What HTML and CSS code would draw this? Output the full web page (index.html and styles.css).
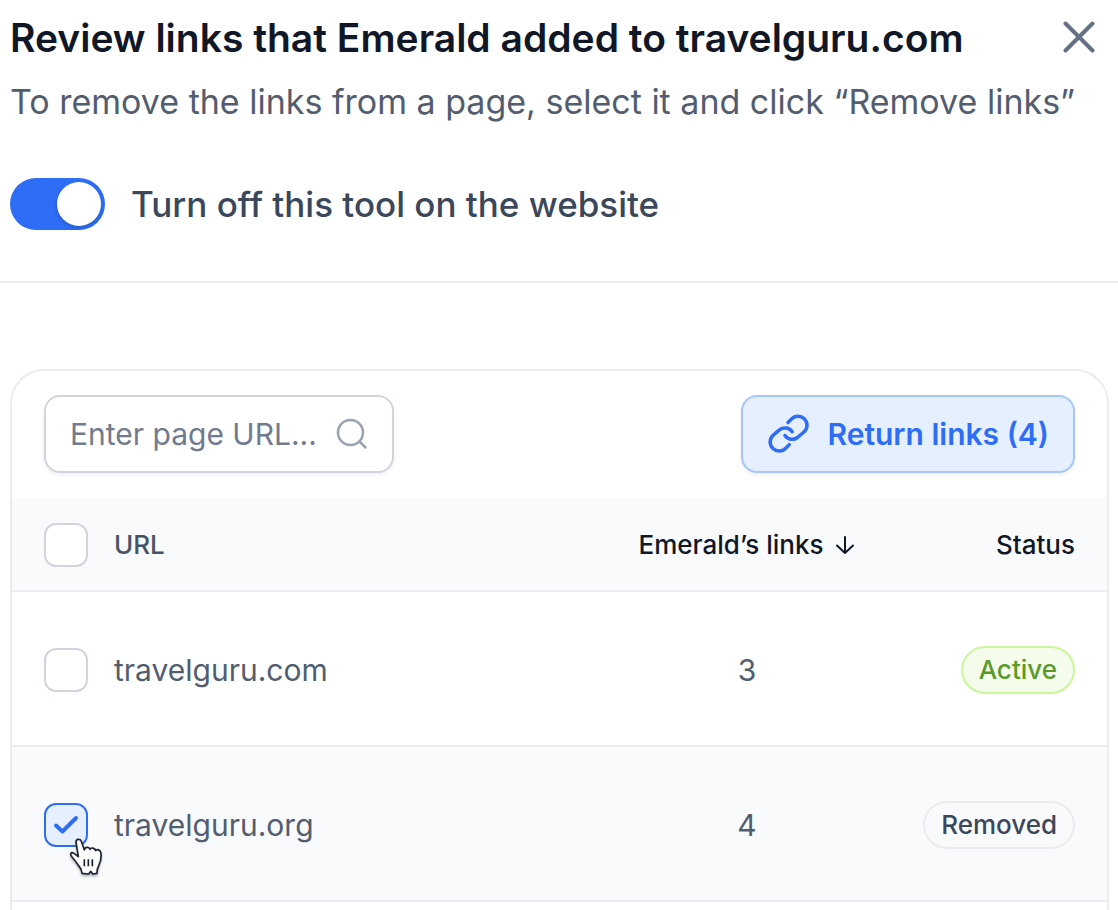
FILE: index.html
```html
<!DOCTYPE html>
<html lang="en">
<head>
<meta charset="utf-8">
<meta name="viewport" content="width=device-width, initial-scale=1">
<title>Review links</title>
<link rel="stylesheet" href="styles.css">
</head>
<body>
<header class="header">
  <div class="title-row">
    <h1 class="title">Review links that Emerald added to travelguru.com</h1>
    <button class="close" type="button" aria-label="Close">
      <svg width="34" height="34" viewBox="0 0 34 34" fill="none" stroke="currentColor" stroke-width="4" stroke-linecap="round"><path d="M3.500 2.500 30.500 29.500M30.500 2.500 3.500 29.500"/></svg>
    </button>
  </div>
  <p class="subtitle">To remove the links from a page, select it and click “Remove links”</p>
  <label class="toggle-row">
    <input class="toggle" type="checkbox" role="switch" checked>
    <span>Turn off this tool on the website</span>
  </label>
</header>
<main class="main">
  <section class="card">
    <div class="toolbar">
      <div class="search">
        <input class="search-input" type="text" placeholder="Enter page URL..." aria-label="Enter page URL">
        <svg class="search-icon" width="32" height="32" viewBox="0 0 32 32" fill="none" stroke="currentColor" stroke-width="2.500" stroke-linecap="round"><circle cx="14.500" cy="14.500" r="12.500"/><path d="m23.500 23.500 6 6"/></svg>
      </div>
      <button class="return" type="button">
        <svg width="42" height="42" viewBox="0 0 42 42" fill="none" stroke="currentColor" stroke-width="3.500" stroke-linecap="round" stroke-linejoin="round"><path d="M21 9.500 24.500 6A9 9 0 0 1 37.500 18.500L30.500 24.500A8.700 8.700 0 0 1 18 22.500M22.200 31.700 18.700 35.200A9 9 0 0 1 5.700 22.700L12.700 16.700A8.700 8.700 0 0 1 25.200 18.700"/></svg>
        <span>Return links (4)</span>
      </button>
    </div>
    <table class="table">
      <thead>
        <tr>
          <th class="col-check"><input class="check" type="checkbox" aria-label="Select all pages"></th>
          <th class="col-url">URL</th>
          <th class="col-links"><span class="sort">Emerald’s links
            <svg width="20" height="20" viewBox="0 0 20 20" fill="none" stroke="currentColor" stroke-width="2" stroke-linecap="round" stroke-linejoin="round"><path d="M10 2v16M2 10.500l8 7.500 8-7.500"/></svg></span></th>
          <th class="col-status">Status</th>
        </tr>
      </thead>
      <tbody>
        <tr>
          <td class="col-check"><input class="check" type="checkbox" aria-label="Select travelguru.com"></td>
          <td class="col-url">travelguru.com</td>
          <td class="col-links">3</td>
          <td class="col-status"><span class="badge badge-active">Active</span></td>
        </tr>
        <tr class="selected">
          <td class="col-check">
            <div class="check-wrap">
              <input class="check" type="checkbox" aria-label="Select travelguru.org" checked>
              <svg class="tick" width="26" height="20" viewBox="0 0 26 20" fill="none" stroke="currentColor" stroke-width="4" stroke-linecap="round" stroke-linejoin="round"><path d="M3 10.500 9.500 16.500 23 3"/></svg>
              <svg class="pointer" width="34" height="38" viewBox="27 24 102 114"><path d="M48 36C48 27 60 25 64 34L73 60C74 50 88 50 90 58C93 51 105 54 107 62C110 56 122 59 123 70C124 84 121 98 116 107C112 113 111 118 111 130L98 132 92 124 86 132 66 130C66 120 62 114 56 107C50 98 44 90 36 81C28 72 34 64 42 70L55 80Z" fill="#fff" stroke="#1b2230" stroke-width="5" stroke-linejoin="round"/><path d="M73 88v21M85 88v21M97 88v21" stroke="#1b2230" stroke-width="5"/></svg>
            </div>
          </td>
          <td class="col-url">travelguru.org</td>
          <td class="col-links">4</td>
          <td class="col-status"><span class="badge badge-removed">Removed</span></td>
        </tr>
      </tbody>
    </table>
  </section>
</main>
</body>
</html>
```
FILE: styles.css
```css
* { box-sizing: border-box; }
body {
  margin: 0;
  min-height: 100vh;
  display: flex;
  flex-direction: column;
  background: #fff;
  color: #525d70;
  font-family: Inter, "Liberation Sans", sans-serif;
}
button, input { font: inherit; }
svg { display: block; flex: none; }

.header {
  padding: 12px 22px 51px 10px;
  border-bottom: 2px solid #eaecf0;
}
.title-row {
  display: flex;
  align-items: center;
  justify-content: space-between;
}
.title {
  margin: 0;
  color: #101828;
  font-size: 39px;
  line-height: 52px;
  font-weight: 600;
}
.close {
  padding: 0;
  border: 0;
  background: none;
  color: #667085;
}
.subtitle {
  margin: 12px 0 0;
  font-size: 34px;
  line-height: 52px;
}
.toggle-row {
  display: flex;
  align-items: center;
  gap: 26px;
  margin-top: 50px;
  color: #3b475b;
  font-size: 35px;
  line-height: 52px;
  font-weight: 500;
}
.toggle {
  appearance: none;
  display: flex;
  justify-content: flex-end;
  flex: none;
  width: 95px;
  height: 52px;
  margin: 0;
  padding: 4px;
  border-radius: 26px;
  background: #2e6df6;
}
.toggle::before {
  content: "";
  width: 44px;
  height: 44px;
  border-radius: 50%;
  background: #fff;
  box-shadow: 0 2px 4px rgba(16, 24, 40, 0.2);
}

.main {
  flex: 1;
  display: flex;
  padding: 86px 9px 0 10px;
}
.card {
  flex: 1;
  border: 2px solid #eaecf0;
  border-bottom: 0;
  border-radius: 34px 34px 0 0;
}
.toolbar {
  display: flex;
  align-items: center;
  justify-content: space-between;
  padding: 24px 32px 25px;
}
.search {
  display: flex;
  align-items: center;
  width: 350px;
  height: 78px;
  padding: 0 24px;
  border: 2px solid #d0d5dd;
  border-radius: 16px;
  box-shadow: 0 2px 4px rgba(16, 24, 40, 0.06);
  color: #98a2b3;
}
.search-input {
  flex: 1;
  min-width: 0;
  padding: 0;
  border: 0;
  outline: 0;
  background: none;
  color: #475467;
  font-size: 30px;
  line-height: 44px;
}
.search-input::placeholder { color: #717a8e; opacity: 1; }
.return {
  display: flex;
  align-items: center;
  gap: 18px;
  height: 78px;
  padding: 0 24px;
  border: 2px solid #a6c6fb;
  border-radius: 16px;
  background: #e6effe;
  box-shadow: 0 2px 4px rgba(16, 24, 40, 0.06);
  color: #2e6df6;
  font-size: 30px;
  line-height: 44px;
  font-weight: 600;
}

.table {
  width: 100%;
  border-collapse: separate;
  border-spacing: 0;
  table-layout: fixed;
}
th, td {
  height: 155px;
  padding: 2px 0 0;
  border-bottom: 2px solid #eaecf0;
  font-size: 30px;
  line-height: 44px;
  font-weight: 400;
  text-align: left;
}
th {
  height: 94px;
  background: #f9fafc;
  color: #101828;
  font-size: 26px;
  line-height: 36px;
  font-weight: 500;
}
th.col-url { color: #475467; }
.selected td { background: #f9fafc; }
.col-check { width: 102px; }
th.col-check, td.col-check { padding-left: 32px; }
th.col-links, td.col-links { width: 280px; text-align: center; }
th.col-status, td.col-status { width: 220px; padding-right: 32px; text-align: right; }
.sort {
  display: flex;
  align-items: center;
  justify-content: center;
  gap: 12px;
}
.check-wrap {
  position: relative;
  width: 44px;
}
.check {
  appearance: none;
  display: block;
  width: 44px;
  height: 44px;
  margin: 0;
  border: 2px solid #d0d5dd;
  border-radius: 12px;
  background: #fff;
}
.check:checked {
  border-color: #2e6df6;
  background: #e6effe;
}
.tick {
  position: absolute;
  top: 12px;
  left: 9px;
  color: #2e6df6;
  pointer-events: none;
}
.pointer {
  position: absolute;
  top: 35px;
  left: 25px;
  filter: drop-shadow(0 2px 1px rgba(16, 24, 40, 0.3));
  pointer-events: none;
}
.badge {
  display: inline-block;
  padding: 4px 16px;
  border: 2px solid #eaecf0;
  border-radius: 24px;
  font-size: 26px;
  line-height: 36px;
  font-weight: 500;
  vertical-align: middle;
}
.badge-active {
  border-color: #caf79c;
  background: #f5fcec;
  color: #5a9a2b;
}
.badge-removed { color: #3b475b; }
```
